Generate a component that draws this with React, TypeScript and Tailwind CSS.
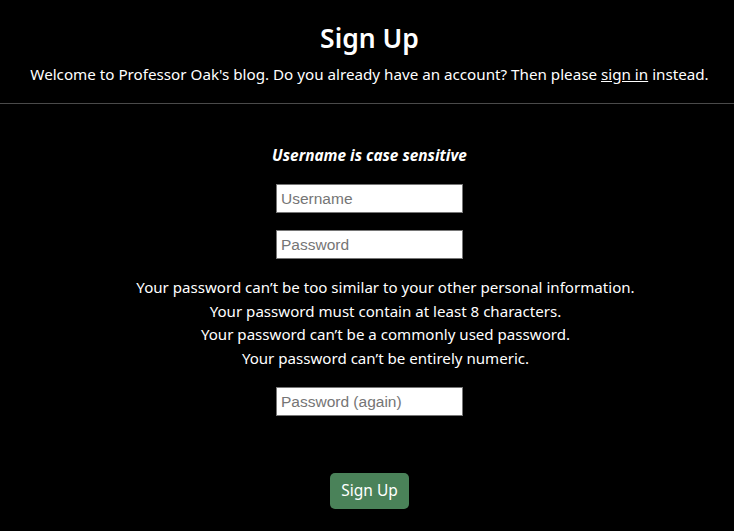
import React, { useState } from 'react'

const rules = [
    'Your password can’t be too similar to your other personal information.',
    'Your password must contain at least 8 characters.',
    'Your password can’t be a commonly used password.',
    'Your password can’t be entirely numeric.',
]

const inputClass =
    'block w-[187px] h-[29px] border border-[#767676] bg-white px-[4px] text-[15.5px] text-black placeholder:text-[#757575] outline-none font-["Liberation_Sans",Arial,sans-serif]'

const App = () => {
    const [username, setUsername] = useState('')
    const [password, setPassword] = useState('')
    const [password2, setPassword2] = useState('')

    return (
        <div className="min-h-[531px] bg-black text-white font-['Noto_Sans',sans-serif]">
            <header className="flex flex-col items-center pl-[5px] pt-[19px] pb-[17px] border-b border-[#4a4a4a]">
                <h1 className="text-[26.5px] font-semibold leading-[38px]">Sign Up</h1>
                <p className="mt-[5px] text-[15.2px] leading-[24px]">
                    Welcome to Professor Oak's blog. Do you already have an account? Then please{' '}
                    <a href="#" className="underline">
                        sign in
                    </a>{' '}
                    instead.
                </p>
            </header>
            <form
                className="flex flex-col items-center pl-[5px] pt-[41px]"
                onSubmit={(e) => e.preventDefault()}
            >
                <p className="text-[15.4px] font-bold italic leading-[22px]">Username is case sensitive</p>
                <input
                    className={`${inputClass} mt-[17px]`}
                    placeholder="Username"
                    value={username}
                    onChange={(e) => setUsername(e.target.value)}
                />
                <input
                    type="password"
                    className={`${inputClass} mt-[17px]`}
                    placeholder="Password"
                    value={password}
                    onChange={(e) => setPassword(e.target.value)}
                />
                <ul className="mt-[17px] pl-[32px] text-center text-[15.1px] leading-[23.5px]">
                    {rules.map((rule) => (
                        <li key={rule}>{rule}</li>
                    ))}
                </ul>
                <input
                    type="password"
                    className={`${inputClass} mt-[17px]`}
                    placeholder="Password (again)"
                    value={password2}
                    onChange={(e) => setPassword2(e.target.value)}
                />
                <button
                    type="submit"
                    className="mt-[57px] w-[79px] h-[36px] rounded-[5px] bg-[#4a8259] text-[15.5px] text-white"
                >
                    Sign Up
                </button>
            </form>
        </div>
    )
}

export default App
